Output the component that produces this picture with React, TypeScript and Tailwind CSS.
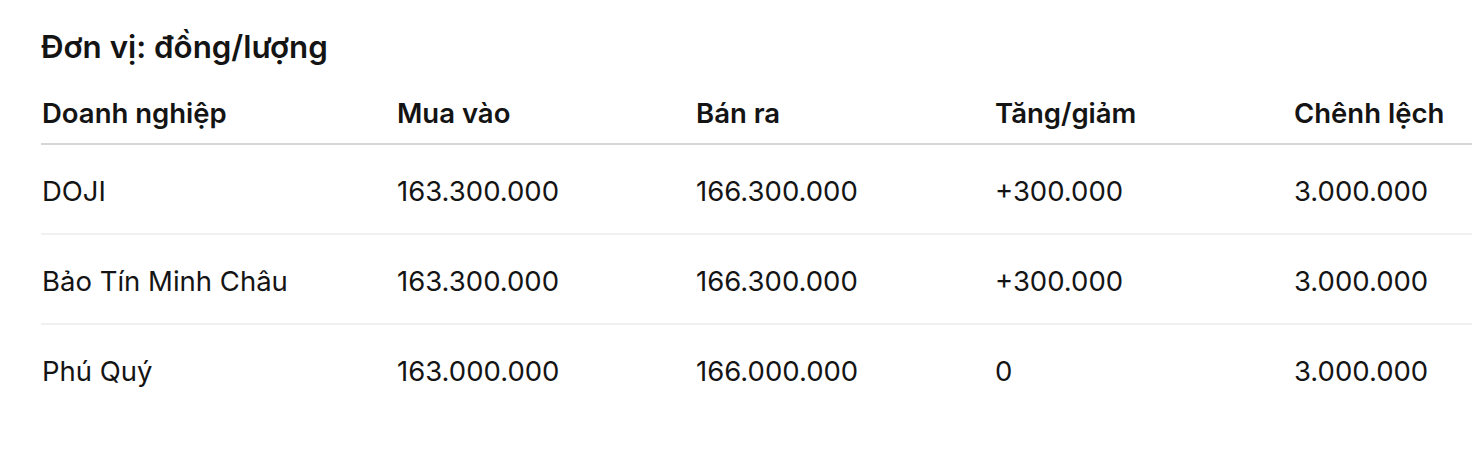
import React from "react";

const rows = [
  ["DOJI", "163.300.000", "166.300.000", "+300.000", "3.000.000"],
  ["Bảo Tín Minh Châu", "163.300.000", "166.300.000", "+300.000", "3.000.000"],
  ["Phú Quý", "163.000.000", "166.000.000", "0", "3.000.000"],
];

const heads = ["Doanh nghiệp", "Mua vào", "Bán ra", "Tăng/giảm", "Chênh lệch"];
const widths = ["w-[355px]", "w-[299px]", "w-[299px]", "w-[299px]", "w-[180px]"];

export default function App() {
  return (
    <div
      className="w-[1472px] h-[458px] bg-white overflow-hidden pl-[41px] text-[#141414]"
      style={{ fontFamily: "Inter, 'Noto Sans', sans-serif" }}
    >
      <div className="pt-[29px] text-[31.3px] leading-[36px] font-semibold">
        Đơn vị: đồng/lượng
      </div>
      <div className="mt-[16px] w-[1440px]">
        <div className="flex border-b-2 border-[#d6d6d6]">
          {heads.map((h, i) => (
            <div key={h} className={`${widths[i]} shrink-0 pt-[17px] pb-[15px] pl-px text-[27.5px] leading-[30px] font-semibold`}>
              {h}
            </div>
          ))}
        </div>
        {rows.map((r, ri) => (
          <div key={ri} className={`flex ${ri < rows.length - 1 ? "border-b-2 border-[#f0f0f0]" : ""}`}>
            {r.map((c, i) => (
              <div key={i} className={`${widths[i]} shrink-0 pt-[31px] pb-[27px] pl-px text-[27.5px] leading-[30px]`}>
                {c}
              </div>
            ))}
          </div>
        ))}
      </div>
    </div>
  );
}
